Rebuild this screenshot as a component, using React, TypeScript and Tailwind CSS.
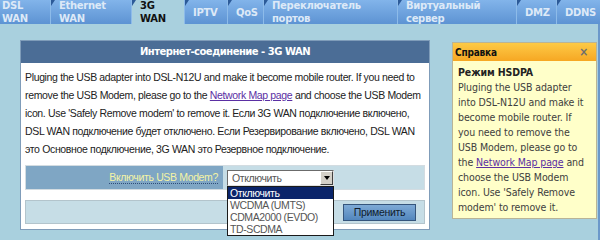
const tabs = [
  { lines: ['DSL', 'WAN'], w: 'w-[50px]', first: true },
  { lines: ['Ethernet', 'WAN'], w: 'w-[81px]' },
  { lines: ['3G', 'WAN'], w: 'w-[53px]', active: true },
  { lines: ['IPTV'], w: 'w-[43px]' },
  { lines: ['QoS'], w: 'w-[36px]' },
  { lines: ['Переключатель', 'портов'], w: 'w-[134px]' },
  { lines: ['Виртуальный', 'сервер'], w: 'w-[119px]' },
  { lines: ['DMZ'], w: 'w-[40px]' },
  { lines: ['DDNS'], w: 'w-[44px]' },
];

const options = ['Отключить', 'WCDMA (UMTS)', 'CDMA2000 (EVDO)', 'TD-SCDMA'];

function Link() {
  return <a className="text-[#5b2fa3] underline">Network Map page</a>;
}

export default function App() {
  return (
    <div className="h-[240px] w-[600px] overflow-hidden bg-[#a9d0de] font-['Liberation_Sans',Arial,sans-serif]">
      {/* tabs */}
      <nav className="flex h-[24px]">
        {tabs.map((t) => (
          <div
            key={t.lines.join(' ')}
            className={`relative flex shrink-0 items-center ${t.w} ${t.first ? 'pl-[2px]' : 'pl-[8px] border-l border-[#8dbbe9]'} ${
              t.active
                ? 'bg-[#a9d0de] text-[#111]'
                : 'bg-gradient-to-b from-[#82b4ea] to-[#5d93d3] text-[#dde9f7]'
            }`}
          >
            {!t.first && (
              <span className="absolute left-0 top-0 border-r-[4px] border-t-[6px] border-r-transparent border-t-[#2c5a98]" />
            )}
            <div className="font-['DejaVu_Sans',sans-serif] text-[10px] font-bold leading-[13px] tracking-[-0.3px]">
              {t.lines.map((l) => (
                <div key={l}>{l}</div>
              ))}
            </div>
          </div>
        ))}
      </nav>

      <div className="flex h-[216px] border-r-2 border-[#6b98ca]">
        {/* main panel */}
        <section className="ml-[20px] mt-[16px] w-[410px] self-start border border-[#7f9cb9] bg-white">
          <h1 className="h-[22px] bg-[#4b6d96] text-center font-['DejaVu_Sans',sans-serif] text-[10px] font-bold leading-[22px] tracking-[-0.5px] text-white">
            Интернет-соединение - 3G WAN
          </h1>
          <div className="px-[4px] pb-[5px]">
            <p className="whitespace-nowrap pt-[5px] text-[10.5px] leading-[18px] tracking-[-0.35px] text-[#222]">
              Pluging the USB adapter into DSL-N12U and make it become mobile router. If you need to
              <br />
              remove the USB Modem, please go to the <Link /> and choose the USB Modem
              <br />
              icon. Use 'Safely Remove modem' to remove it. Если 3G WAN подключение включено,
              <br />
              DSL WAN подключение будет отключено. Если Резервирование включено, DSL WAN
              <br />
              это Основное подключение, 3G WAN это Резервное подключение.
            </p>

            <div className="mt-[7px] flex h-[25px] border border-[#d3dce1]">
              <div className="flex w-[197px] items-center justify-end bg-[#7fa6c4] pr-[5px]">
                <span className="border-b border-dotted border-[#2e4c78] text-[10.5px] leading-[12px] tracking-[-0.35px] text-[#f4f4a4]">
                  Включить USB Modem?
                </span>
              </div>
              <div className="flex flex-1 items-center bg-[#c6dde6] pl-[4px]">
                <div className="relative">
                  <div className="flex h-[16px] w-[107px] border border-t-[#6b6b6b] border-l-[#6b6b6b] border-r-[#e0e0e0] border-b-[#e0e0e0] bg-white">
                    <span className="flex-1 pl-[4px] text-[10.5px] leading-[14px] tracking-[-0.4px] text-[#555]">Отключить</span>
                    <span className="flex w-[13px] items-center justify-center border border-t-white border-l-white border-r-[#404040] border-b-[#404040] bg-[#d4d0c8]">
                      <span className="border-x-[3px] border-t-[4px] border-x-transparent border-t-black" />
                    </span>
                  </div>
                  <ul className="absolute left-0 top-full z-10 w-[107px] border border-[#1a1a1a] bg-white text-[10.5px] leading-[12px] tracking-[-0.4px] text-[#555]">
                    {options.map((o, i) => (
                      <li key={o} className={`pl-[2px] ${i === 0 ? 'bg-[#0a246a] text-white' : ''}`}>
                        {o}
                      </li>
                    ))}
                  </ul>
                </div>
              </div>
            </div>

            <div className="mt-[10px] flex h-[24px] items-center justify-end border border-[#b3c4cc] bg-[#c6dde6] pr-[8px]">
              <button className="h-[17px] w-[73px] border border-[#35557c] bg-gradient-to-b from-[#7eaad6] to-[#5286bd] text-[10.5px] leading-[15px] tracking-[-0.3px] text-[#0f1c2e]">
                Применить
              </button>
            </div>
          </div>
        </section>

        {/* help */}
        <aside className="ml-[22px] mt-[18px] w-[145px] self-start border border-[#b9b497] bg-[#ffffc9]">
          <div className="flex h-[18px] items-center justify-between bg-gradient-to-b from-[#fdca45] to-[#f6a722] pl-[2px] pr-[8px] font-['DejaVu_Sans_Condensed','DejaVu_Sans',sans-serif] text-[10px] font-bold tracking-[-0.2px]">
            <span className="text-[#111]">Справка</span>
            <span className="text-[12px] text-[#6e6e6e]">×</span>
          </div>
          <div className="whitespace-nowrap px-[5px] pb-[3px] pt-[4px] font-['DejaVu_Sans_Condensed','DejaVu_Sans',sans-serif] text-[10.5px] leading-[15px] tracking-[-0.1px] text-[#3e3e3e]">
            <div className="font-bold text-[#222]">Режим HSDPA</div>
            <div>Pluging the USB adapter</div>
            <div>into DSL-N12U and make it</div>
            <div>become mobile router. If</div>
            <div>you need to remove the</div>
            <div>USB Modem, please go to</div>
            <div>
              the <Link /> and
            </div>
            <div>choose the USB Modem</div>
            <div>icon. Use 'Safely Remove</div>
            <div>modem' to remove it.</div>
          </div>
        </aside>
      </div>
    </div>
  );
}
